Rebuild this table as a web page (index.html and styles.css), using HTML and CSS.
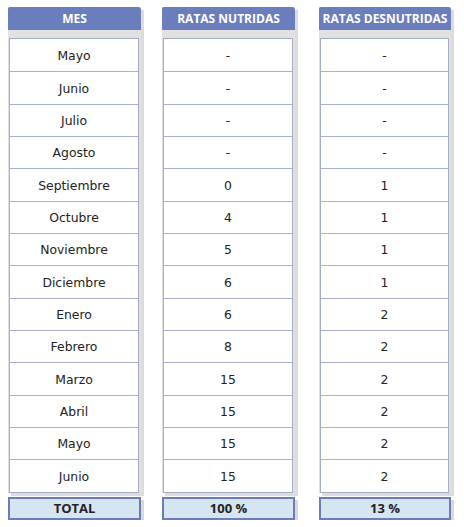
FILE: index.html
```html
<!DOCTYPE html>
<html lang="es">
<head>
<meta charset="utf-8">
<title>Ratas</title>
<link rel="stylesheet" href="styles.css">
</head>
<body>
<div class="table">
  <div class="col">
    <div class="stack">
      <div class="head">MES</div>
      <div class="band"></div>
      <div class="body">
        <div class="row">Mayo</div>
        <div class="row">Junio</div>
        <div class="row">Julio</div>
        <div class="row">Agosto</div>
        <div class="row">Septiembre</div>
        <div class="row">Octubre</div>
        <div class="row">Noviembre</div>
        <div class="row">Diciembre</div>
        <div class="row">Enero</div>
        <div class="row">Febrero</div>
        <div class="row">Marzo</div>
        <div class="row">Abril</div>
        <div class="row">Mayo</div>
        <div class="row">Junio</div>
      </div>
    </div>
    <div class="total">TOTAL</div>
  </div>
  <div class="col col-mid">
    <div class="stack">
      <div class="head">RATAS NUTRIDAS</div>
      <div class="band"></div>
      <div class="body">
        <div class="row">-</div>
        <div class="row">-</div>
        <div class="row">-</div>
        <div class="row">-</div>
        <div class="row">0</div>
        <div class="row">4</div>
        <div class="row">5</div>
        <div class="row">6</div>
        <div class="row">6</div>
        <div class="row">8</div>
        <div class="row">15</div>
        <div class="row">15</div>
        <div class="row">15</div>
        <div class="row">15</div>
      </div>
    </div>
    <div class="total">100 %</div>
  </div>
  <div class="col col-last">
    <div class="stack">
      <div class="head">RATAS DESNUTRIDAS</div>
      <div class="band"></div>
      <div class="body">
        <div class="row">-</div>
        <div class="row">-</div>
        <div class="row">-</div>
        <div class="row">-</div>
        <div class="row">1</div>
        <div class="row">1</div>
        <div class="row">1</div>
        <div class="row">1</div>
        <div class="row">2</div>
        <div class="row">2</div>
        <div class="row">2</div>
        <div class="row">2</div>
        <div class="row">2</div>
        <div class="row">2</div>
      </div>
    </div>
    <div class="total">13 %</div>
  </div>
</div>
</body>
</html>
```
FILE: styles.css
```css
html, body {
  margin: 0;
  padding: 0;
  background: #ffffff;
}
body {
  padding: 7px 0 0 8px;
}
.table {
  display: flex;
  align-items: flex-start;
}
.col {
  width: 133px;
  display: flex;
  flex-direction: column;
}
.col-mid {
  margin-left: 21px;
}
.col-last {
  margin-left: 24px;
  width: 132px;
}
.stack {
  background: #e1e1e1;
  box-shadow: 3px 3px 0 #dcdcdc;
}
.head {
  height: 23px;
  background: #6a7ebd;
  border-radius: 2px 3px 0 0;
  color: #ffffff;
  font-family: "Open Sans", "Liberation Sans", sans-serif;
  font-weight: 700;
  font-size: 12px;
  display: flex;
  align-items: center;
  justify-content: center;
}
.band {
  height: 8px;
}
.body {
  background: #ffffff;
  border: 1px solid #a5acc8;
  margin: 0 2px 0 1px;
}
.row {
  height: 32.35px;
  box-sizing: border-box;
  border-top: 1px solid #a9b0cb;
  display: flex;
  align-items: center;
  justify-content: center;
  font-family: "DejaVu Sans", Verdana, sans-serif;
  font-size: 12.4px;
  color: #222222;
}
.row:first-child {
  border-top: none;
}
.total {
  margin-top: 4px;
  height: 23px;
  box-sizing: border-box;
  background: #d6e5f2;
  border: 2px solid #6b7db6;
  box-shadow: 3px 3px 0 #d9d9d9;
  display: flex;
  align-items: center;
  justify-content: center;
  font-family: "Open Sans", "Liberation Sans", sans-serif;
  font-weight: 700;
  font-size: 13px;
  color: #222222;
}
```
